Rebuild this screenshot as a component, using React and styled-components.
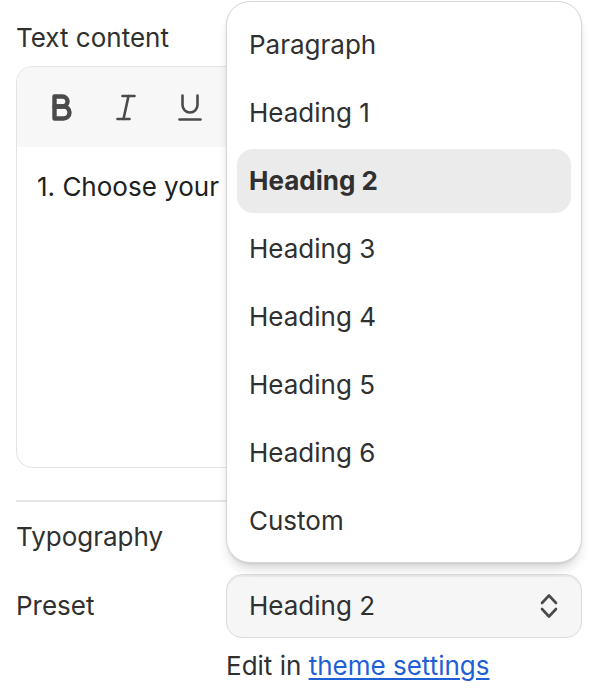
import React from "react";
import styled, { createGlobalStyle } from "styled-components";

const Global = createGlobalStyle`
  html, body { margin: 0; padding: 0; background: #ffffff; }
  body { font-family: Inter, "Noto Sans", sans-serif; color: #303030; -webkit-font-smoothing: antialiased; }
  * { box-sizing: border-box; }
`;

const Page = styled.div`
  position: relative;
  width: 592px;
  height: 700px;
  overflow: hidden;
  padding: 18px 10px 0 16px;
  display: flex;
  flex-direction: column;
  font-size: 26px;
  line-height: 40px;
`;

const Label = styled.div`
  font-size: 26px;
  line-height: 40px;
  color: #303030;
  margin-bottom: ${(p) => p.$mb || 0}px;
`;

const Editor = styled.div`
  height: 402px;
  border: 1px solid #e3e3e3;
  border-radius: 16px;
  overflow: hidden;
  display: flex;
  flex-direction: column;
`;

const Toolbar = styled.div`
  height: 80px;
  background: #f7f7f7;
  display: flex;
  align-items: center;
  gap: 8px;
  padding-left: 17px;
`;

const ToolButton = styled.button`
  width: 56px;
  height: 48px;
  border: none;
  background: transparent;
  display: flex;
  align-items: center;
  justify-content: center;
  padding: 0;
  color: #4a4a4a;
`;

const EditorBody = styled.div`
  padding: 20px 20px;
  font-size: 26px;
  line-height: 40px;
  color: #202020;
  white-space: nowrap;
`;

const Divider = styled.hr`
  border: none;
  height: 2px;
  background: #e6e6e6;
  margin: 32px 0 15px;
`;

const FieldRow = styled.div`
  display: grid;
  grid-template-columns: 210px 1fr;
  align-items: center;
  margin-top: 17px;
`;

const SelectBox = styled.div`
  height: 64px;
  border: 1px solid #dcdcdc;
  border-radius: 16px;
  background: #f6f6f6;
  box-shadow: inset 0 2px 1px rgba(0, 0, 0, 0.05);
  display: flex;
  align-items: center;
  justify-content: space-between;
  padding: 0 23px 0 22px;
  color: #303030;
`;

const HelpText = styled.div`
  margin: 8px 0 0 210px;
  color: #303030;
`;

const Link = styled.a`
  color: #1f5fd6;
  text-decoration: underline;
  text-underline-offset: 3px;
  text-decoration-thickness: 2px;
`;

const Popover = styled.div`
  position: absolute;
  top: 1px;
  left: 226px;
  width: 356px;
  height: 562px;
  background: #ffffff;
  border: 1px solid #d6d6d6;
  border-radius: 24px;
  box-shadow: 0 8px 12px -4px rgba(26, 26, 26, 0.22), 0 1px 2px rgba(26, 26, 26, 0.08);
  padding: 11px 10px 9px;
  display: flex;
  flex-direction: column;
  gap: 4px;
`;

const Option = styled.div`
  height: 64px;
  border-radius: 16px;
  padding: 0 12px;
  display: flex;
  align-items: center;
  font-size: 26px;
  color: #303030;
  font-weight: ${(p) => (p.$selected ? 650 : 400)};
  background: ${(p) => (p.$selected ? "#ebebeb" : "transparent")};
`;

const BoldIcon = () => (
  <svg width="20" height="27" viewBox="0 0 20 27" fill="none" stroke="currentColor" strokeWidth="4.4" strokeLinejoin="round">
    <path d="M2.5 2.5 H10.5 A5 5 0 0 1 10.5 12.5 H2.5 Z" />
    <path d="M2.5 12.5 H11.5 A6 6 0 0 1 11.5 24.5 H2.5 Z" />
  </svg>
);

const ItalicIcon = () => (
  <svg width="20" height="27" viewBox="0 0 20 27" fill="none" stroke="currentColor" strokeWidth="2.6" strokeLinecap="round">
    <path d="M6.5 2 H18.5" />
    <path d="M1.5 25 H13.5" />
    <path d="M12.5 2 L7.5 25" />
  </svg>
);

const UnderlineIcon = () => (
  <svg width="24" height="27" viewBox="0 0 24 27" fill="none" stroke="currentColor" strokeWidth="2.6" strokeLinecap="round">
    <path d="M4.5 1.5 V11 A7.5 7.5 0 0 0 19.5 11 V1.5" />
    <path d="M1.5 25.5 H22.5" />
  </svg>
);

const Chevrons = () => (
  <svg width="18" height="28" viewBox="0 0 18 28" fill="none" stroke="#4a4a4a" strokeWidth="2.6" strokeLinecap="round" strokeLinejoin="round">
    <path d="M2 11 L9 3.5 L16 11" />
    <path d="M2 17 L9 24.5 L16 17" />
  </svg>
);

const options = ["Paragraph", "Heading 1", "Heading 2", "Heading 3", "Heading 4", "Heading 5", "Heading 6", "Custom"];

export default function App() {
  return (
    <>
      <Global />
      <Page>
        <Label $mb={8}>Text content</Label>
        <Editor>
          <Toolbar>
            <ToolButton aria-label="Bold"><BoldIcon /></ToolButton>
            <ToolButton aria-label="Italic"><ItalicIcon /></ToolButton>
            <ToolButton aria-label="Underline"><UnderlineIcon /></ToolButton>
          </Toolbar>
          <EditorBody>1. Choose your</EditorBody>
        </Editor>
        <Divider />
        <Label>Typography</Label>
        <FieldRow>
          <Label>Preset</Label>
          <SelectBox>
            <span>Heading 2</span>
            <Chevrons />
          </SelectBox>
        </FieldRow>
        <HelpText>
          Edit in <Link href="#">theme settings</Link>
        </HelpText>
        <Popover role="listbox">
          {options.map((o) => (
            <Option key={o} $selected={o === "Heading 2"}>{o}</Option>
          ))}
        </Popover>
      </Page>
    </>
  );
}
